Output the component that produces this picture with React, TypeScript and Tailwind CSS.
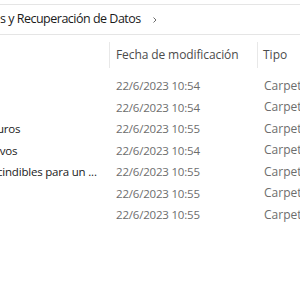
import React from 'react';

const rows = [
  { name: '', date: '22/6/2023 10:54' },
  { name: '', date: '22/6/2023 10:54' },
  { name: 'uros', date: '22/6/2023 10:55' },
  { name: 'ivos', date: '22/6/2023 10:54' },
  { name: 'cindibles para un ...', date: '22/6/2023 10:55' },
  { name: '', date: '22/6/2023 10:55' },
  { name: '', date: '22/6/2023 10:55' },
];

const App: React.FC = () => {
  return (
    <div className="w-[300px] h-[300px] overflow-hidden bg-white text-[12px] font-['Segoe_UI','Open_Sans',sans-serif]">
      <div className="h-[5px] border-b border-[#e5e5e5]" />

      {/* breadcrumb */}
      <div className="h-[30px] border-b border-[#e5e5e5] flex items-center">
        <span className="text-[12.5px] tracking-[-0.5px] text-[#1a1a1a] whitespace-nowrap">s y Recuperación de Datos</span>
        <svg className="ml-[10px] mt-[1px]" width="8" height="8" viewBox="0 0 8 8">
          <path d="M2.5 1.5 L5 4 L2.5 6.5" fill="none" stroke="#6b6b6b" strokeWidth="1" />
        </svg>
      </div>

      {/* column headers */}
      <div className="flex h-[40px] pt-[7px]">
        <div className="w-[109px] shrink-0" />
        <div className="w-[148px] shrink-0 h-[26px] border-l border-[#e8e8e8] flex items-center pl-[6px] text-[#4c4c4c] tracking-[-0.1px] whitespace-nowrap">
          Fecha de modificación
        </div>
        <div className="flex-1 h-[26px] border-l border-[#e8e8e8] flex items-center pl-[5px] text-[#4c4c4c]">
          Tipo
        </div>
      </div>

      {/* rows */}
      <div className="flex flex-col">
        {rows.map((r, i) => (
          <div key={i} className="flex h-[21.5px] items-center whitespace-nowrap">
            <div className="w-[109px] shrink-0 overflow-hidden text-[11.5px] tracking-[-0.2px] text-[#1a1a1a]">
              <span className="block ml-[-3px]">{r.name}</span>
            </div>
            <div className="w-[148px] shrink-0 pl-[7px] text-[11.5px] tracking-[-0.2px] text-[#6d6d6d]">{r.date}</div>
            <div className="flex-1 pl-[7px] text-[#6d6d6d]">Carpeta de archivos</div>
          </div>
        ))}
      </div>
    </div>
  );
};

export default App;
